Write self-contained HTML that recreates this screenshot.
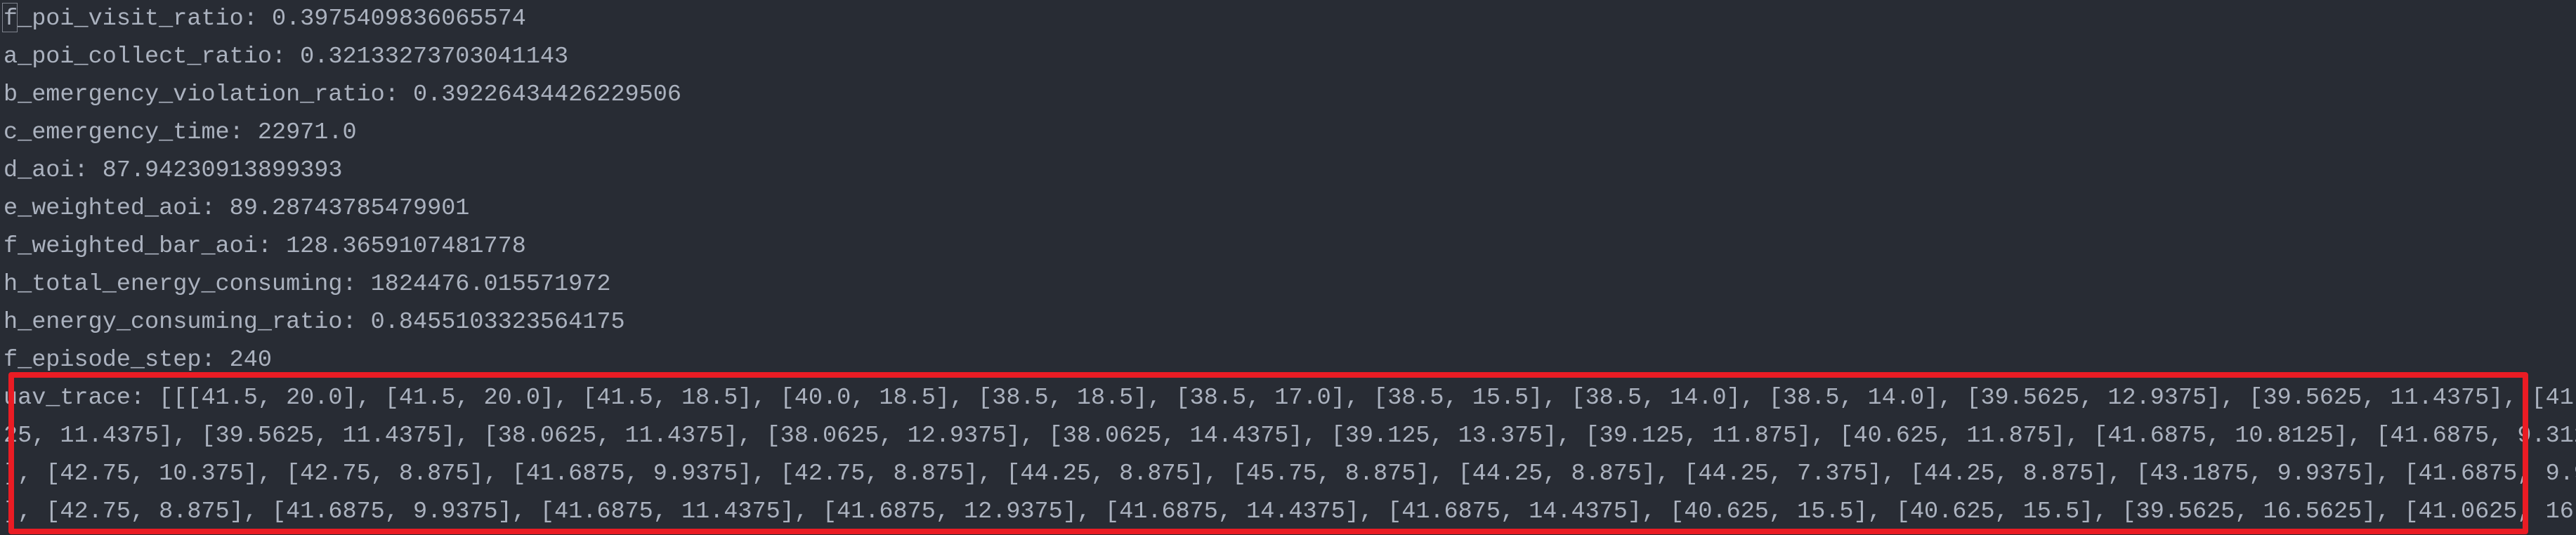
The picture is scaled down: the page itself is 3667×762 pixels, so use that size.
<!DOCTYPE html>
<html><head><meta charset="utf-8"><style>
html,body{margin:0;padding:0;background:#282c34;width:3667px;height:762px;overflow:hidden}
.t{position:absolute;left:5px;top:0;font-family:"Liberation Mono",monospace;font-size:33.5px;line-height:54px;color:#abb2bf;width:3662px;overflow:hidden}
.t div{height:54px;overflow:hidden;white-space:pre}
.cur{position:absolute;left:3px;top:4px;width:20px;height:40px;border:1.5px solid #7f848e}
.box{position:absolute;left:12px;top:530px;width:3571px;height:215px;border:8px solid #ea1c24;border-radius:4px}
</style></head><body>
<div class="t"><div>f_poi_visit_ratio: 0.3975409836065574</div><div>a_poi_collect_ratio: 0.32133273703041143</div><div>b_emergency_violation_ratio: 0.39226434426229506</div><div>c_emergency_time: 22971.0</div><div>d_aoi: 87.94230913899393</div><div>e_weighted_aoi: 89.28743785479901</div><div>f_weighted_bar_aoi: 128.3659107481778</div><div>h_total_energy_consuming: 1824476.015571972</div><div>h_energy_consuming_ratio: 0.8455103323564175</div><div>f_episode_step: 240</div><div>uav_trace: [[[41.5, 20.0], [41.5, 20.0], [41.5, 18.5], [40.0, 18.5], [38.5, 18.5], [38.5, 17.0], [38.5, 15.5], [38.5, 14.0], [38.5, 14.0], [39.5625, 12.9375], [39.5625, 11.4375], [41.0625, 11.4375]</div><div>25, 11.4375], [39.5625, 11.4375], [38.0625, 11.4375], [38.0625, 12.9375], [38.0625, 14.4375], [39.125, 13.375], [39.125, 11.875], [40.625, 11.875], [41.6875, 10.8125], [41.6875, 9.3125], [41.6875]</div><div>], [42.75, 10.375], [42.75, 8.875], [41.6875, 9.9375], [42.75, 8.875], [44.25, 8.875], [45.75, 8.875], [44.25, 8.875], [44.25, 7.375], [44.25, 8.875], [43.1875, 9.9375], [41.6875, 9.9375], [41.6]</div><div>], [42.75, 8.875], [41.6875, 9.9375], [41.6875, 11.4375], [41.6875, 12.9375], [41.6875, 14.4375], [41.6875, 14.4375], [40.625, 15.5], [40.625, 15.5], [39.5625, 16.5625], [41.0625, 16.5625], [4]</div></div>
<div class="cur"></div>
<div class="box"></div>
</body></html>
